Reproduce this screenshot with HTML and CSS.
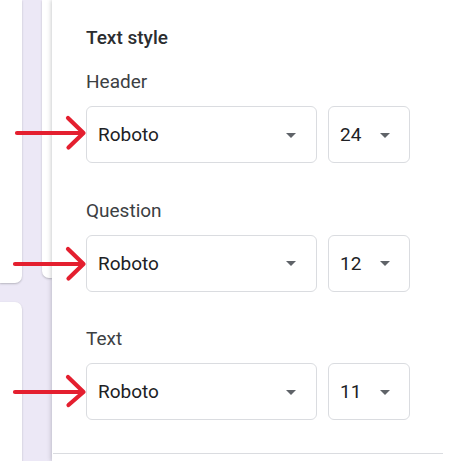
FILE: index.html
```html
<!DOCTYPE html>
<html lang="en">
<head>
<meta charset="utf-8">
<title>Text style</title>
<link rel="stylesheet" href="styles.css">
</head>
<body>
<div class="page">
  <div class="canvas">
    <div class="col col-a">
      <div class="card card-a"></div>
      <div class="card card-b"></div>
    </div>
    <div class="col col-c">
      <div class="card card-c"></div>
    </div>
  </div>
  <div class="panel">
    <h2 class="title">Text style</h2>
    <div class="field">
      <div class="label">Header</div>
      <div class="row">
        <div class="select select-font"><span>Roboto</span><i class="caret"></i></div>
        <div class="select select-size"><span>24</span><i class="caret"></i></div>
      </div>
    </div>
    <div class="field">
      <div class="label">Question</div>
      <div class="row">
        <div class="select select-font"><span>Roboto</span><i class="caret"></i></div>
        <div class="select select-size"><span>12</span><i class="caret"></i></div>
      </div>
    </div>
    <div class="field field-last">
      <div class="label">Text</div>
      <div class="row">
        <div class="select select-font"><span>Roboto</span><i class="caret"></i></div>
        <div class="select select-size"><span>11</span><i class="caret"></i></div>
      </div>
    </div>
    <div class="divider"></div>
  </div>
  <svg class="arrows" width="100" height="461" viewBox="0 0 100 461" aria-hidden="true">
    <g fill="none" stroke="#e41f2f" stroke-width="4.2" stroke-linecap="round" stroke-linejoin="round">
      <path d="M17 133 H83 M68 118 L83.5 133 L68.5 147.5"/>
      <path d="M15 264 H83 M68 249 L83.5 264 L68.5 278.5"/>
      <path d="M15 392 H83 M68 377 L83.5 392 L68.5 405"/>
    </g>
  </svg>
</div>
</body>
</html>
```

FILE: styles.css
```css
html, body {
  margin: 0;
  padding: 0;
  background: #ffffff;
}

.page {
  position: relative;
  display: flex;
  width: 450px;
  height: 461px;
  overflow: hidden;
  font-family: Roboto, "Noto Sans", Arial, sans-serif;
}

.canvas {
  width: 52px;
  flex: none;
  display: flex;
  background: #ece8f6;
}

.col-a {
  width: 22px;
  display: flex;
  flex-direction: column;
  gap: 19px;
}

.col-c {
  flex: 1;
  margin-left: 19.5px;
}

.card {
  background: #ffffff;
  box-shadow: 0 1px 2px rgba(60, 64, 67, 0.3);
}

.card-a {
  height: 283px;
  border-bottom-right-radius: 7px;
}

.card-b {
  flex: 1;
  border-top-right-radius: 7px;
}

.card-c {
  height: 278px;
  border-bottom-left-radius: 7px;
}

.panel {
  flex: 1;
  background: #ffffff;
  padding: 26px 0 0 34px;
  box-shadow: -1px 0 4px rgba(60, 64, 67, 0.25);
}

.title {
  margin: 0 0 20px;
  font-size: 19px;
  line-height: 24px;
  font-weight: 500;
  color: #2b2d30;
}

.field {
  margin-bottom: 35.5px;
}

.field-last {
  margin-bottom: 33px;
}

.label {
  font-size: 19px;
  line-height: 24px;
  color: #3c4043;
  margin-bottom: 12px;
}

.row {
  display: flex;
  gap: 11px;
}

.select {
  box-sizing: border-box;
  height: 57px;
  border: 1px solid #dadce0;
  border-radius: 6px;
  display: flex;
  align-items: center;
  justify-content: space-between;
  padding: 0 20px 0 11px;
  font-size: 19px;
  color: #202124;
}

.select-font {
  width: 231px;
}

.select-size {
  width: 81.5px;
  padding-right: 19px;
}

.caret {
  width: 0;
  height: 0;
  border-left: 5px solid transparent;
  border-right: 5px solid transparent;
  border-top: 5px solid #5f6368;
  margin-top: 1px;
}

.divider {
  height: 1px;
  background: #dadce0;
  margin: 0 7px 0 -33px;
}

.arrows {
  position: absolute;
  left: 0;
  top: 0;
}
```
